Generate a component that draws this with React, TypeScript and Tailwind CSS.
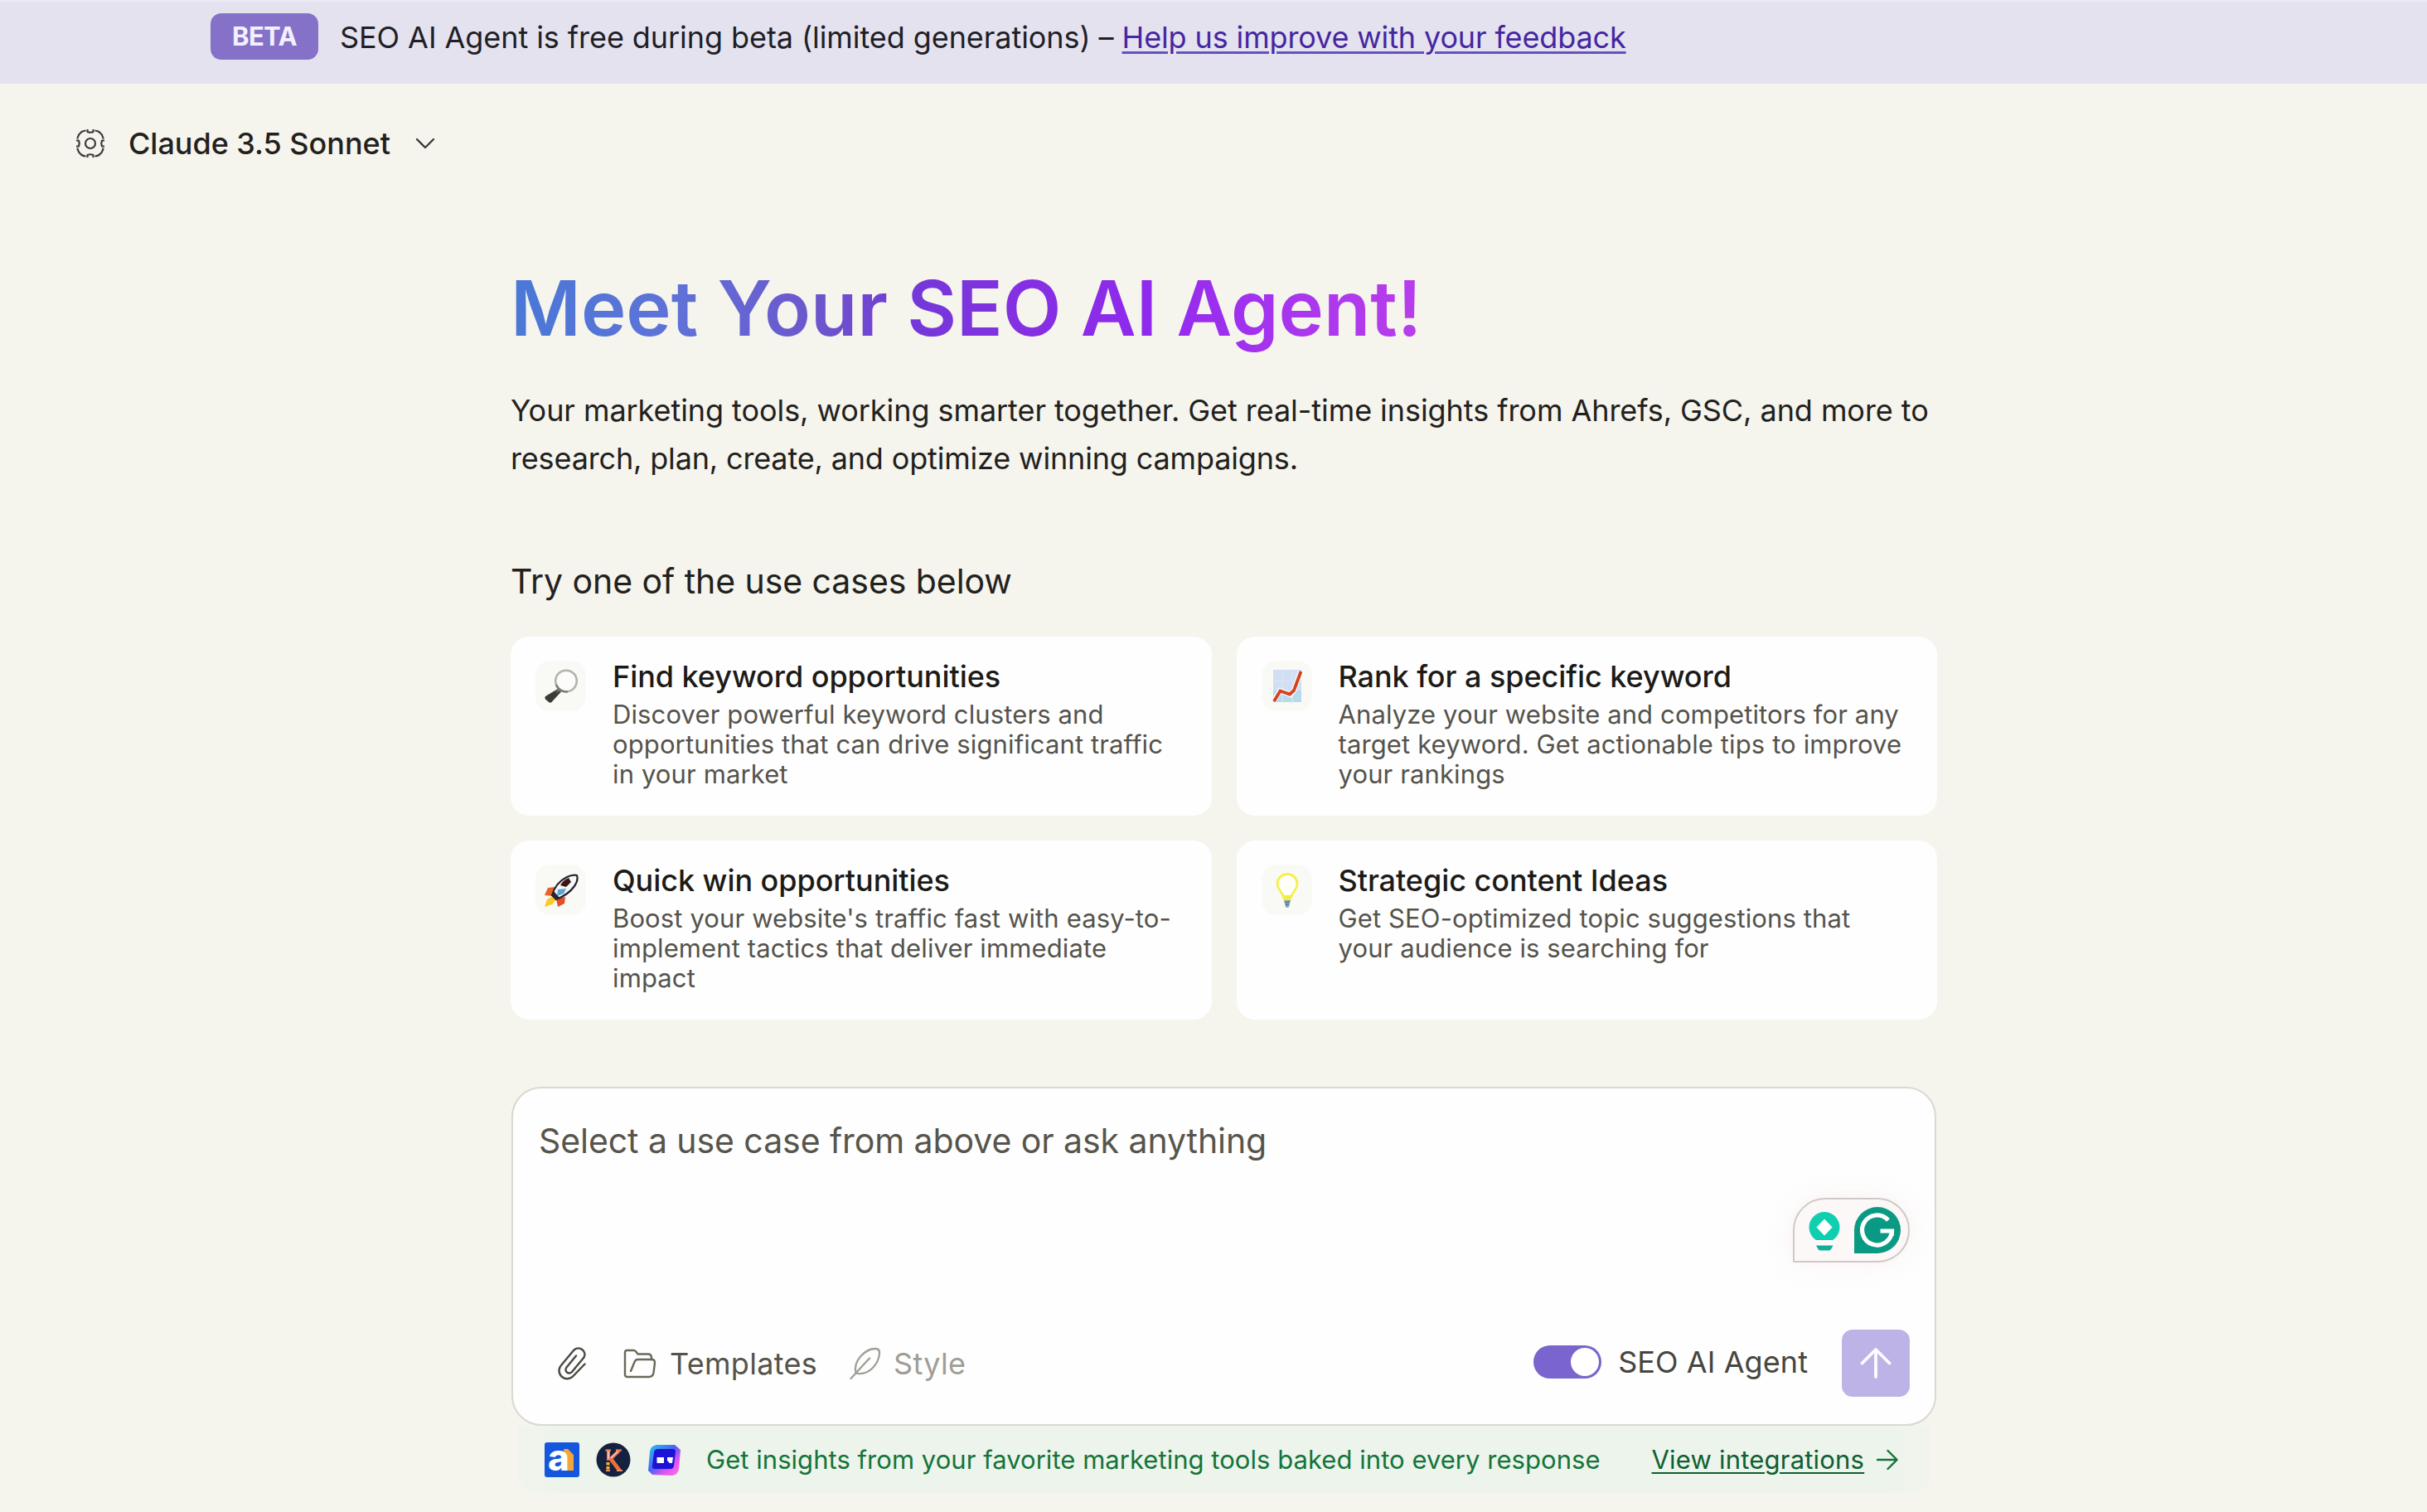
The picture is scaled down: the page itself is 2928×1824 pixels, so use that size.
import React from "react";

const SearchEmoji = () => (
  <svg viewBox="0 0 42 42" className="size-[42px]">
    <path d="M17 24 L21 27.500 L9.500 40 Q8 41.500 6 40 L2 36.500 Q0.500 35 2 33 Z" fill="#3c3a34" />
    <path d="M15.500 28 L19.500 24" stroke="#6b665c" strokeWidth="3" />
    <circle cx="27" cy="14.500" r="12.800" fill="#fcfcfb" stroke="#b3b2b0" strokeWidth="2.600" />
    <path d="M15 19 A13 13 0 0 0 29 27.300" fill="none" stroke="#7d7a78" strokeWidth="2.400" />
  </svg>
);

const ChartEmoji = () => (
  <svg viewBox="0 0 36 42" className="ml-[2px] h-[42px] w-[36px]">
    <rect x="1" y="1" width="34" height="39" fill="#d0dff3" />
    <rect x="1" y="26" width="34" height="14" fill="#b8daed" />
    <path d="M1 14H35M12 1V40M24 1V40" stroke="#dbe7f5" strokeWidth="1" />
    <path d="M2 38 L9.500 26 L22 31 L26 26 L34 3" fill="none" stroke="#f4f6fa" strokeWidth="6.500" />
    <path d="M2 39 L9.500 26.500 L21 30.500 L26 26 L34.500 3" fill="none" stroke="#d4421f" strokeWidth="3.800" />
  </svg>
);

const RocketEmoji = () => (
  <svg viewBox="0 0 42 42" className="mt-[2px] size-[42px]">
    <path d="M14 16 L5 17 L1 26 L12 27 Z" fill="#e8622a" />
    <path d="M26 28 L25 36 L17 40 L15 30 Z" fill="#e2502a" />
    <path d="M11 27 L4 31 L1 40 L10 37 L15 31 Z" fill="#fdc821" />
    <path d="M10 26 Q14 11 28 4 Q35 0.500 40 2 Q42 8 37 15 Q30 25 15 31 Z" fill="#f6f7fa" stroke="#25242c" strokeWidth="2.200" />
    <path d="M20 14 Q23 8 30 5 L33 10 L27 16 Z" fill="#3a1612" />
    <path d="M17 19 L27 18 L24 24 L16 27 Z" fill="#5aa5cc" />
    <path d="M10 26 L16 31 L19 29 L12 21 Z" fill="#2a2434" />
  </svg>
);

const BulbEmoji = () => (
  <svg viewBox="0 0 28 44" className="ml-[2px] mt-[2px] h-[44px] w-[28px]">
    <path
      d="M10 31 Q9 26 5 21 Q2 17 2 13 A12 11.500 0 0 1 26 13 Q26 17 23 21 Q19 26 18 31 Z"
      fill="#fffffa"
      stroke="#f5f04a"
      strokeWidth="2.800"
    />
    <path d="M10 27 H18 V33 H10 Z" fill="#f3ec45" />
    <path d="M10 33 L18 33 L16 41 Q14 43 12 41 Z" fill="#86a6b8" />
    <path d="M11 36 L17 34.500 M12 39 L16 37.500" stroke="#4a6c84" strokeWidth="1.200" />
  </svg>
);

const GearIcon = () => (
  <svg viewBox="0 0 36 36" className="h-9 w-9" fill="none" stroke="#3b3a35" strokeWidth="2.200" strokeLinejoin="round">
    <path d="M14.500 1V4 Q18 5.500 21.500 4V1M14.500 35V32 Q18 30.500 21.500 32V35M1 14.500H4 Q5.500 18 4 21.500H1M35 14.500H32 Q30.500 18 32 21.500H35" />
    <path d="M12.500 2.500 Q8 3 6.500 5 Q4 7 3.500 9 Q2.500 10.500 2.500 12.500" />
    <path d="M23.500 2.500 Q28 3 29.500 5 Q32 7 32.500 9 Q33.500 10.500 33.500 12.500" />
    <path d="M12.500 33.500 Q8 33 6.500 31 Q4 29 3.500 27 Q2.500 25.500 2.500 23.500" />
    <path d="M23.500 33.500 Q28 33 29.500 31 Q32 29 32.500 27 Q33.500 25.500 33.500 23.500" />
    <circle cx="18" cy="18" r="6" />
  </svg>
);

const PaperclipIcon = () => (
  <svg viewBox="0 0 36 40" className="h-10 w-9" fill="none" stroke="#4c4a43" strokeWidth="2.500" strokeLinecap="round" strokeLinejoin="round">
    <path d="M23 10.500 L11.500 24.500 A4.200 4.200 0 0 0 18 30 L32.500 12.500 A7.600 7.600 0 0 0 20.500 3.500 L5 22 A9.600 9.600 0 0 0 19.500 35 L33.500 20.500" />
  </svg>
);

const FolderIcon = () => (
  <svg viewBox="0 0 40 36" className="h-9 w-10" fill="none" stroke="#6a675a" strokeWidth="2.400" strokeLinecap="round" strokeLinejoin="round">
    <path d="M2 31 V4.500 Q2 2 4.500 2 H12.500 Q14 2 15 3.200 L17.500 6.500 H30 Q33.500 6.500 34 10.500 V13" />
    <path d="M9 27 L13.500 16 Q14.500 13 17.500 13 H34.500 Q38 13 38 17 L36.500 29 Q35.500 34 31 34 H5 Q2 34 2 31" />
  </svg>
);

const FeatherIcon = () => (
  <svg viewBox="0 0 38 40" className="h-10 w-[38px]" fill="none" stroke="#a09d94" strokeWidth="2.300" strokeLinecap="round" strokeLinejoin="round">
    <path d="M1.500 38 L24 13.500" />
    <path d="M7.500 31.500 Q5 20 13.500 11 Q22 1.500 32 2 Q36.500 2.500 36 8 Q35 18 27.500 25.500 Q19 34 7.500 31.500 Z" />
  </svg>
);

const GrammarlyBadge = () => (
  <div className="absolute right-[30px] top-[132px] flex h-[78px] w-[141px] items-center gap-[16px] rounded-[39px] rounded-bl-none border-2 border-[#d0c8c8] bg-[#fdf8f8] pl-[17px] shadow-[0_0_28px_rgba(240,200,200,0.25)]">
    <svg viewBox="0 0 38 48" className="mt-1 h-12 w-[38px]">
      <circle cx="19" cy="18.500" r="18.500" fill="#0fcfb0" />
      <path d="M19 9 L28 18.500 L19 28 L10 18.500 Z" fill="#fff" stroke="#fff" strokeWidth="1" strokeLinejoin="round" />
      <path d="M7.500 37 Q19 40.500 30.500 37 V34 H7.500 Z" fill="#fdf8f8" />
      <path d="M9 40.500 H29.500 L27 45 Q26 46.500 24 46.500 H14.500 Q12.500 46.500 11.500 45 Z" fill="#12ad97" />
    </svg>
    <svg viewBox="0 0 58 58" className="size-[58px]">
      <path d="M1 57 V29 A28 28 0 1 1 29 57 Z" fill="#0a9a83" />
      <path d="M42 17 A18 18 0 1 0 46.500 30 H32.500" fill="none" stroke="#fff" strokeWidth="5.200" />
      <path d="M46.500 28 V36" stroke="#fff" strokeWidth="4.500" />
    </svg>
  </div>
);

const AhrefsLogo = () => (
  <svg viewBox="0 0 42 42" className="size-[42px] overflow-visible">
    <rect width="42" height="42" rx="3" fill="#1557dc" />
    <path d="M23 8 L28 8 L35 15 V34 H26 Z" fill="#f5a63a" />
    <text x="4" y="34" fontFamily="Inter, sans-serif" fontSize="44" fontWeight="800" fill="#fff">a</text>
  </svg>
);

const KeywordLogo = () => (
  <svg viewBox="0 0 42 42" className="size-[42px]">
    <circle cx="21" cy="21" r="20.500" fill="#14223f" />
    <path d="M15 9 V22 M28 10 L16.500 21" fill="none" stroke="#f2705a" strokeWidth="4" />
    <path d="M15 11 V20 M26 11 L18 19" stroke="#f7cdbd" strokeWidth="1.600" />
    <path d="M18 20 L28.500 34" stroke="#f0703a" strokeWidth="4.600" />
    <path d="M14.500 24 V33" stroke="#f5b53a" strokeWidth="4" strokeDasharray="3.500 1.500" />
    <path d="M24 9.500 H31 M25 34 H32 M12 34 H17 M11.500 9.500 H18" stroke="#f58a68" strokeWidth="2" />
  </svg>
);

const BotLogo = () => (
  <svg viewBox="0 0 42 42" className="size-[42px]">
    <defs>
      <linearGradient id="bot" x1="0" y1="0" x2="1" y2="1">
        <stop offset="0" stopColor="#28c8ee" />
        <stop offset="0.450" stopColor="#4a62f2" />
        <stop offset="0.700" stopColor="#e052f0" />
        <stop offset="1" stopColor="#ff7ae0" />
      </linearGradient>
    </defs>
    <path d="M11 3 H33 L40 9 L38 32 Q37 39 30 40 L6 39 L1 34 L3 11 Q4 4 11 3 Z" fill="url(#bot)" />
    <path d="M13 8 H31 Q34 8 34 11 L32 28 Q31.500 32 28 32 H9 Q5.500 32 6 28 L8 12 Q8.500 8 13 8 Z" fill="#1d12d8" />
    <path d="M11.500 18 H20 V25 H11.500 Z M24 18 H31 L30 25 H27 L24 22 Z" fill="#fff" />
  </svg>
);

const useCases = [
  {
    icon: <SearchEmoji />,
    title: "Find keyword opportunities",
    lines: ["Discover powerful keyword clusters and", "opportunities that can drive significant traffic", "in your market"],
  },
  {
    icon: <ChartEmoji />,
    title: "Rank for a specific keyword",
    lines: ["Analyze your website and competitors for any", "target keyword. Get actionable tips to improve", "your rankings"],
  },
  {
    icon: <RocketEmoji />,
    title: "Quick win opportunities",
    lines: ["Boost your website's traffic fast with easy-to-", "implement tactics that deliver immediate", "impact"],
  },
  {
    icon: <BulbEmoji />,
    title: "Strategic content Ideas",
    lines: ["Get SEO-optimized topic suggestions that", "your audience is searching for"],
  },
];

const App = () => {
  return (
    <div className="h-[1824px] w-[2928px] overflow-hidden bg-[#f5f4ed] font-['Inter',sans-serif] text-[#22211d]">
      {/* Beta banner */}
      <div className="flex h-[101px] items-start border-t-2 border-[#efecf8] bg-[#e5e2f0] pl-[254px] pt-[14px]">
        <span className="flex h-[56px] w-[130px] items-center justify-center rounded-[13px] bg-[#8571c7] text-[31px] font-bold tracking-[-0.6px] text-[#f4f0ff]">
          BETA
        </span>
        <p className="ml-[26px] mt-[2px] whitespace-nowrap text-[36px] leading-[55px] tracking-[-0.07px] text-[#201f26]">
          SEO AI Agent is free during beta (limited generations) –{" "}
          <a href="#" className="tracking-[-0.13px] text-[#4527a0] underline decoration-[#6a4fbf] decoration-[3px] underline-offset-[4px]">
            Help us improve with your feedback
          </a>
        </p>
      </div>

      {/* Model picker */}
      <div className="ml-[91px] mt-[50px] flex h-11 items-center">
        <GearIcon />
        <span className="ml-[28px] text-[36px] font-medium leading-[44px] tracking-[-0.03px]">Claude 3.5 Sonnet</span>
        <svg viewBox="0 0 24 14" className="ml-[30px] h-[14px] w-6" fill="none" stroke="#3b3a35" strokeWidth="2.300" strokeLinecap="round" strokeLinejoin="round">
          <path d="M2 2 L12 12 L22 2" />
        </svg>
      </div>

      <main className="ml-[616px] mt-[122px] w-[1721px]">
        <h1 className="w-[1100px] whitespace-nowrap bg-[linear-gradient(90deg,#4a78d6_0%,#5f72d8_18%,#6d55cc_34%,#7438d8_44%,#8430e2_56%,#9029ee_70%,#a835ee_85%,#b83eec_100%)] bg-clip-text text-[92px] font-semibold leading-[110px] tracking-[0.03px] text-transparent">
          Meet Your SEO AI Agent!
        </h1>
        <p className="mt-10 whitespace-nowrap text-[36px] leading-[57.5px] tracking-[-0.06px]">
          Your marketing tools, working smarter together. Get real-time insights from Ahrefs, GSC, and more to
          <br />
          <span className="tracking-[-0.16px]">research, plan, create, and optimize winning campaigns.</span>
        </p>

        <h2 className="mt-[94px] text-[41px] leading-[50px] tracking-[-0.06px]">Try one of the use cases below</h2>
        <div className="mt-[42px] grid grid-cols-2 gap-x-[30px] gap-y-[30px]">
          {useCases.map((item) => (
            <div key={item.title} className="flex h-[216px] gap-[32px] rounded-[22px] bg-[#fefefe] pl-[30px] pt-[26px]">
              <div className="mt-[3px] flex size-[61px] shrink-0 items-center justify-center rounded-[18px] bg-[#f9f9f6]">
                {item.icon}
              </div>
              <div>
                <h3 className="text-[36px] font-medium leading-[44px] tracking-[-0.05px] text-[#1c1b18]">{item.title}</h3>
                <p className="mt-[6px] whitespace-nowrap text-[31px] leading-[35.8px] tracking-[0.12px] text-[#55534c]">
                  {item.lines.map((line) => (
                    <span key={line} className="block">{line}</span>
                  ))}
                </p>
              </div>
            </div>
          ))}
        </div>

        {/* Prompt box */}
        <div className="relative ml-px mt-[81px] flex h-[409px] w-[1719px] flex-col justify-between rounded-[36px] border-2 border-[#dad8d0] bg-[#fefefe] pb-[33px] pl-[31px] pr-[30px] pt-[38px]">
          <p className="text-[41px] leading-[50px] tracking-[-0.07px] text-[#57554b]">Select a use case from above or ask anything</p>
          <GrammarlyBadge />
          <div className="flex h-[82px] items-center">
            <div className="ml-[22px] mt-[2px]">
              <PaperclipIcon />
            </div>
            <div className="ml-[44px] mt-[2px] flex items-center">
              <FolderIcon />
              <span className="ml-4 text-[36px] leading-[46px] tracking-[0.3px] text-[#55534a]">Templates</span>
            </div>
            <div className="ml-[39px] mt-[2px] flex items-center">
              <FeatherIcon />
              <span className="ml-[15px] text-[36px] leading-[46px] tracking-[0.3px] text-[#a09d96]">Style</span>
            </div>
            <div className="ml-auto flex items-center">
              <div className="-mt-[2px] flex h-10 w-[82px] items-center justify-end rounded-full bg-[#7a64cd] pr-[3px]">
                <div className="size-[34px] rounded-full bg-white" />
              </div>
              <span className="-mt-[2px] ml-[20px] text-[36px] leading-[44px] tracking-[0.07px] text-[#47453e]">SEO AI Agent</span>
              <div className="ml-[41px] flex h-[81px] w-[82px] items-center justify-center rounded-[13px] bg-[#beb3e7]">
                <svg viewBox="0 0 38 38" className="size-[38px]" fill="none" stroke="#fdfcff" strokeWidth="3.800" strokeLinecap="round" strokeLinejoin="round">
                  <path d="M19 36 V3 M2.500 19.500 L19 3 L35.500 19.500" />
                </svg>
              </div>
            </div>
          </div>
        </div>

        {/* Integrations strip */}
        <div className="ml-[10px] flex h-[81px] w-[1702px] items-center rounded-b-[22px] bg-[linear-gradient(90deg,#f1f4ec_0%,#ecf4ec_4%,#ecf4ec_96%,#f1f4ec_100%)] pl-[31px] text-[31px] leading-[40px] text-[#14743a]">
          <AhrefsLogo />
          <div className="ml-5">
            <KeywordLogo />
          </div>
          <div className="ml-5">
            <BotLogo />
          </div>
          <span className="ml-[29px] whitespace-nowrap tracking-[0.04px]">Get insights from your favorite marketing tools baked into every response</span>
          <a href="#" className="ml-[62px] whitespace-nowrap tracking-[0.2px] text-[#0f5f30] underline decoration-2 underline-offset-[4px]">
            View integrations
          </a>
          <svg viewBox="0 0 28 26" className="ml-[14px] h-[26px] w-7" fill="none" stroke="#14743a" strokeWidth="2.400" strokeLinecap="round" strokeLinejoin="round">
            <path d="M2 13 H25.500 M14.500 2 L25.500 13 L14.500 24" />
          </svg>
        </div>
      </main>
    </div>
  );
};

export default App;
